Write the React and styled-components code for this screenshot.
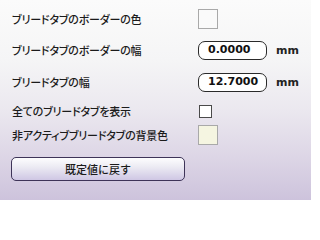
import React from 'react';
import styled, { createGlobalStyle } from 'styled-components';

const GlobalStyle = createGlobalStyle`
  html, body {
    margin: 0;
    padding: 0;
  }
`;

const Panel = styled.div`
  width: 311px;
  height: 200px;
  box-sizing: border-box;
  padding: 9px 0 0 12px;
  display: flex;
  flex-direction: column;
  background: linear-gradient(
    180deg,
    #fbfbfb 0%,
    #f5f5f6 30%,
    #ebe8ef 55%,
    #ddd6e6 78%,
    #cdc3dc 100%
  );
  font-family: 'Noto Sans CJK JP', 'Noto Sans', sans-serif;
  font-size: 11px;
  color: #1b1b1b;
  overflow: hidden;
`;

const Row = styled.div`
  display: flex;
  align-items: center;
  height: 20px;
  margin-top: ${p => p.$gap || 0}px;
`;

const Label = styled.span`
  width: 186px;
  font-feature-settings: 'palt';
  font-weight: 500;
  letter-spacing: -0.2px;
  white-space: nowrap;
`;

const Swatch = styled.div`
  width: 18px;
  height: 18px;
  border: 1px solid #a9a9a9;
  background: ${p => p.$color};
`;

const NumberField = styled.div`
  width: 69px;
  height: 19px;
  box-sizing: border-box;
  border: 1px solid #2a2a2a;
  border-radius: 7px;
  background: #fff;
  padding: 0 0 1px 9px;
  display: flex;
  align-items: center;
  font-family: 'DejaVu Sans', Verdana, sans-serif;
  font-weight: bold;
  font-size: 11px;
  color: #111;
`;

const Unit = styled.span`
  margin-left: 9px;
  font-family: 'DejaVu Sans', Verdana, sans-serif;
  font-weight: bold;
  font-size: 11px;
  color: #222;
`;

const Check = styled.div`
  width: 11px;
  height: 11px;
  margin-left: 1px;
  border: 1px solid #4a4a4a;
  background: #fff;
`;

const ResetButton = styled.button`
  width: 174px;
  height: 24px;
  margin-top: 12px;
  margin-left: -1px;
  box-sizing: border-box;
  border: 1px solid #3e3458;
  border-radius: 5px;
  background: linear-gradient(180deg, #fdfdfe 0%, #ecebf3 40%, #cfc7e4 100%);
  font-family: 'Noto Sans CJK JP', sans-serif;
  font-size: 11px;
  font-weight: 500;
  color: #1b1b1b;
  padding: 0 0 1px;
  cursor: pointer;
`;

const App = () => (
  <>
    <GlobalStyle />
    <Panel>
      <Row>
        <Label>ブリードタブのボーダーの色</Label>
        <Swatch $color="#fafafa" />
      </Row>
      <Row $gap={11}>
        <Label>ブリードタブのボーダーの幅</Label>
        <NumberField>0.0000</NumberField>
        <Unit>mm</Unit>
      </Row>
      <Row $gap={12}>
        <Label>ブリードタブの幅</Label>
        <NumberField>12.7000</NumberField>
        <Unit>mm</Unit>
      </Row>
      <Row $gap={9}>
        <Label>全てのブリードタブを表示</Label>
        <Check />
      </Row>
      <Row $gap={4}>
        <Label>非アクティブブリードタブの背景色</Label>
        <Swatch $color="#f5f5e1" />
      </Row>
      <ResetButton>既定値に戻す</ResetButton>
    </Panel>
  </>
);

export default App;
